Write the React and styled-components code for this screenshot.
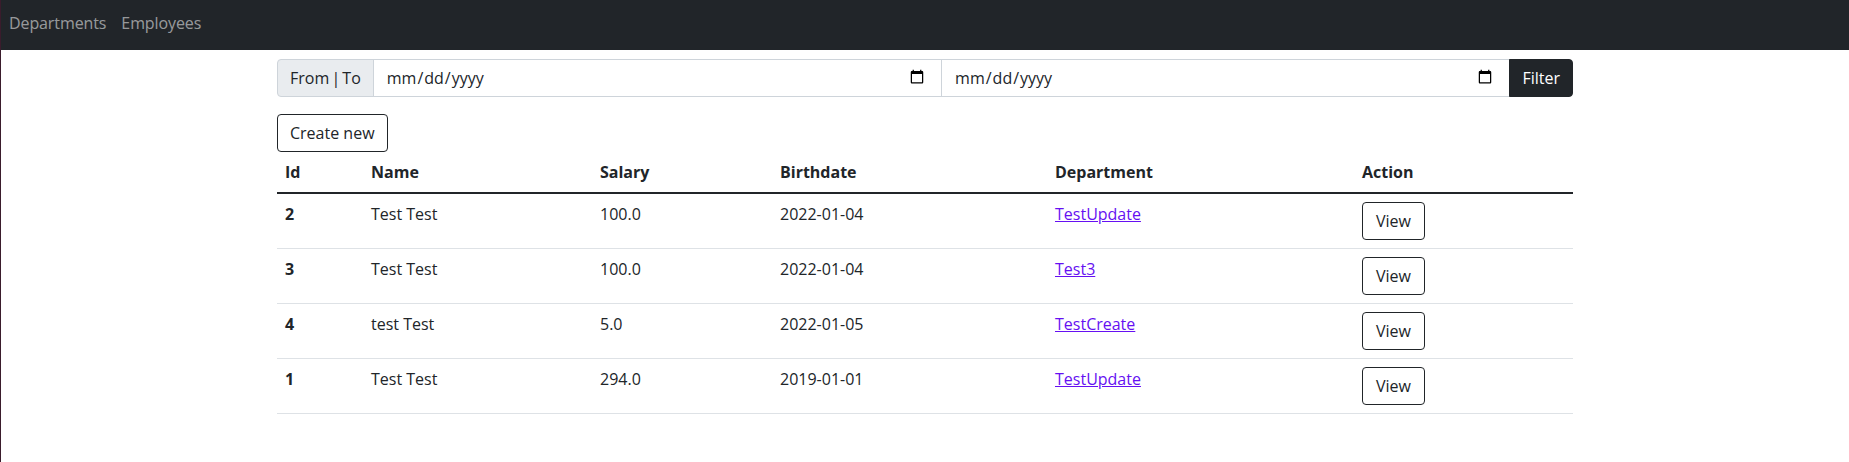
import React from "react";
import styled, { createGlobalStyle } from "styled-components";

const GlobalStyle = createGlobalStyle`
  html, body {
    margin: 0;
    padding: 0;
    background: #ffffff;
  }
  body {
    font-family: "Open Sans", "Noto Sans", sans-serif;
    font-size: 16px;
    line-height: 24px;
    color: #212529;
    border-left: 1px solid #3a1c2c;
    min-height: 100vh;
    box-sizing: border-box;
  }
  *, *::before, *::after {
    box-sizing: border-box;
  }
`;

const employees = [
  { id: 2, name: "Test Test", salary: "100.0", birthdate: "2022-01-04", department: "TestUpdate" },
  { id: 3, name: "Test Test", salary: "100.0", birthdate: "2022-01-04", department: "Test3" },
  { id: 4, name: "test Test", salary: "5.0", birthdate: "2022-01-05", department: "TestCreate" },
  { id: 1, name: "Test Test", salary: "294.0", birthdate: "2019-01-01", department: "TestUpdate" },
];

const columns = [
  { label: "Id", width: 86 },
  { label: "Name", width: 229 },
  { label: "Salary", width: 180 },
  { label: "Birthdate", width: 275 },
  { label: "Department", width: 307 },
  { label: "Action", width: 219 },
];

function App() {
  return (
    <>
      <GlobalStyle />
      <Navbar>
        <NavLink href="#">Departments</NavLink>
        <NavLink href="#">Employees</NavLink>
      </Navbar>
      <Container>
        <InputGroup>
          <GroupLabel>From | To</GroupLabel>
          <DateInput type="date" />
          <DateInput type="date" />
          <FilterButton type="button">Filter</FilterButton>
        </InputGroup>
        <OutlineButton type="button">Create new</OutlineButton>
        <Table>
          <thead>
            <tr>
              {columns.map((c) => (
                <HeadCell key={c.label} $width={c.width}>
                  {c.label}
                </HeadCell>
              ))}
            </tr>
          </thead>
          <Body>
            {employees.map((e) => (
              <tr key={e.id}>
                <Cell $bold>{e.id}</Cell>
                <Cell>{e.name}</Cell>
                <Cell>{e.salary}</Cell>
                <Cell>{e.birthdate}</Cell>
                <Cell>
                  <DeptLink href="#">{e.department}</DeptLink>
                </Cell>
                <Cell>
                  <OutlineButton type="button" $compact>
                    View
                  </OutlineButton>
                </Cell>
              </tr>
            ))}
          </Body>
        </Table>
      </Container>
    </>
  );
}

const Navbar = styled.nav`
  display: flex;
  align-items: flex-start;
  height: 50px;
  background-color: #212529;
  padding-top: 7px;
`;

const NavLink = styled.a`
  display: block;
  padding: 4px 7px 4px 8px;
  color: rgba(255, 255, 255, 0.55);
  text-decoration: none;
  font-size: 16px;
  line-height: 24px;
  letter-spacing: -0.1px;
`;

const Container = styled.main`
  width: 100%;
  max-width: 1320px;
  margin: 0 auto;
  padding: 9px 12px 0;
`;

const InputGroup = styled.div`
  display: flex;
  align-items: stretch;
  width: 100%;
  height: 38px;
  margin-bottom: 16px;
`;

const GroupLabel = styled.span`
  display: flex;
  align-items: center;
  padding: 6px 12px;
  background-color: #e9ecef;
  border: 1px solid #ced4da;
  border-radius: 4px 0 0 4px;
  color: #212529;
  white-space: nowrap;
  word-spacing: -2px;
`;

const DateInput = styled.input`
  flex: 1 1 0;
  min-width: 0;
  margin-left: -1px;
  padding: 6px 12px;
  border: 1px solid #ced4da;
  border-radius: 0;
  background: #ffffff;
  color: #212529;
  font-family: "Open Sans", "Noto Sans", sans-serif;
  font-size: 16px;
  line-height: 24px;
  outline: none;

  &::-webkit-calendar-picker-indicator {
    width: 16px;
    height: 18px;
    padding: 0;
    margin: 0 4px 0 0;
  }
`;

const FilterButton = styled.button`
  margin-left: -1px;
  padding: 6px 12px;
  border: 1px solid #212529;
  border-radius: 0 4px 4px 0;
  background-color: #212529;
  color: #ffffff;
  font-family: "Open Sans", "Noto Sans", sans-serif;
  font-size: 16px;
  line-height: 24px;
  cursor: pointer;
`;

const OutlineButton = styled.button`
  display: inline-block;
  height: 38px;
  margin-top: ${(p) => (p.$compact ? "0" : "1px")};
  padding: ${(p) => (p.$compact ? "6px 13px" : "6px 12px")};
  border: 1px solid #212529;
  border-radius: 4px;
  background: transparent;
  color: #212529;
  font-family: "Open Sans", "Noto Sans", sans-serif;
  font-size: 16px;
  line-height: 24px;
  cursor: pointer;
`;

const Table = styled.table`
  width: 100%;
  table-layout: fixed;
  border-collapse: collapse;
  vertical-align: top;
  color: #212529;
`;

const HeadCell = styled.th`
  width: ${(p) => p.$width}px;
  padding: 8px;
  text-align: left;
  font-weight: 700;
  border-bottom: 1px solid #dee2e6;
`;

const Body = styled.tbody`
  border-top: 2px solid #212529;
`;

const Cell = styled.td`
  padding: 8px;
  font-weight: ${(p) => (p.$bold ? 700 : 400)};
  border-bottom: 1px solid #dee2e6;
  vertical-align: top;
`;

const DeptLink = styled.a`
  color: #6610f2;
  text-decoration: underline;
`;

export default App;
